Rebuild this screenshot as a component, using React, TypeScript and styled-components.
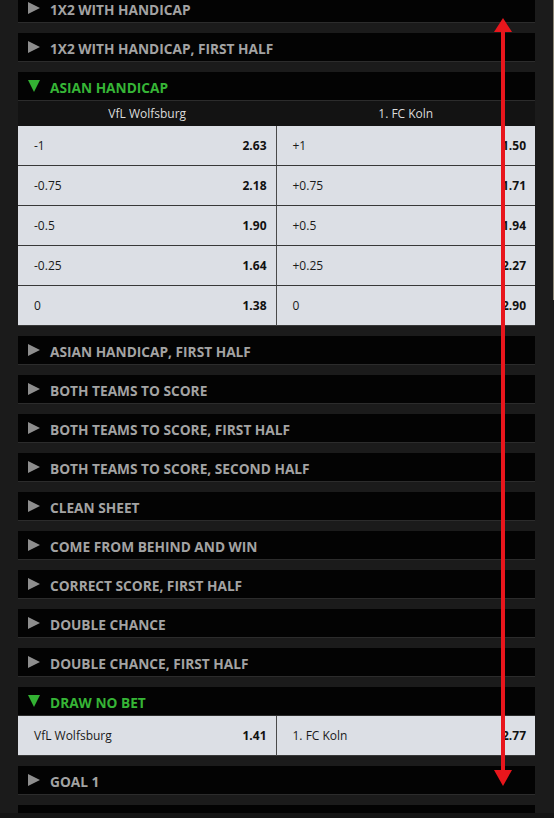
import React from 'react';
import styled, { createGlobalStyle } from 'styled-components';

const GlobalStyle = createGlobalStyle`
  html, body {
    margin: 0;
    padding: 0;
    background: #1b1b1b;
    font-family: "Open Sans", "Liberation Sans", sans-serif;
  }
`;

const Viewport = styled.div`
  position: relative;
  width: 554px;
  height: 818px;
  overflow: hidden;
  background: #1b1b1b;
`;

const MarketList = styled.div`
  display: flex;
  flex-direction: column;
  gap: 10px;
  padding: 0 19px 0 18px;
  margin-top: -6px;
`;

const Market = styled.section`
  display: flex;
  flex-direction: column;
`;

const MarketHeader = styled.div`
  height: 28px;
  background: #030303;
  border-bottom: 1px solid #2c2c2c;
  display: flex;
  align-items: center;
  padding-left: 10px;
  gap: 10px;
`;

const Caret = styled.span<{ $open: boolean }>`
  width: 0;
  height: 0;
  ${({ $open }) =>
    $open
      ? `
    border-left: 6px solid transparent;
    border-right: 6px solid transparent;
    border-top: 12px solid #33b233;
  `
      : `
    border-top: 6px solid transparent;
    border-bottom: 6px solid transparent;
    border-left: 12px solid #8e8e8e;
  `}
`;

const MarketTitle = styled.span<{ $open: boolean }>`
  font-size: 13.7px;
  font-weight: 700;
  text-transform: uppercase;
  color: ${({ $open }) => ($open ? '#36b536' : '#a3a3a3')};
  position: relative;
  top: 1px;
`;

const TeamsRow = styled.div`
  display: grid;
  grid-template-columns: 1fr 1fr;
  height: 25px;
  background: #131313;
  color: #dcdcdc;
  font-size: 12px;
  align-items: center;
  text-align: center;
`;

const OddsGrid = styled.div`
  display: grid;
  grid-template-columns: 1fr 1fr;
`;

const OddsCell = styled.div<{ $left?: boolean }>`
  height: 39px;
  background: #dcdfe5;
  border-bottom: 1px solid #383838;
  border-right: ${({ $left }) => ($left ? '1px solid #4a4a4a' : 'none')};
  display: flex;
  align-items: center;
  justify-content: space-between;
  padding: 0 9px 0 16px;
  font-size: 12px;
  color: #1a1a1a;
`;

const Price = styled.b`
  font-weight: 700;
  color: #111;
`;

const ScrollThumb = styled.div`
  position: absolute;
  right: 0;
  top: 0;
  width: 1px;
  height: 300px;
  background: #8d8878;
`;

const BottomBar = styled.div`
  position: absolute;
  left: 0;
  right: 0;
  bottom: 0;
  height: 5px;
  background: #151515;
`;

const Overlay = styled.svg`
  position: absolute;
  left: 0;
  top: 0;
  pointer-events: none;
`;

type Odd = [string, string];
type MarketData = {
  title: string;
  open?: boolean;
  teams?: [string, string];
  rows?: [Odd, Odd][];
};

const markets: MarketData[] = [
  { title: '1X2 with handicap' },
  { title: '1X2 with handicap, first half' },
  {
    title: 'Asian handicap',
    open: true,
    teams: ['VfL Wolfsburg', '1. FC Koln'],
    rows: [
      [['-1', '2.63'], ['+1', '1.50']],
      [['-0.75', '2.18'], ['+0.75', '1.71']],
      [['-0.5', '1.90'], ['+0.5', '1.94']],
      [['-0.25', '1.64'], ['+0.25', '2.27']],
      [['0', '1.38'], ['0', '2.90']],
    ],
  },
  { title: 'Asian handicap, first half' },
  { title: 'Both teams to score' },
  { title: 'Both teams to score, first half' },
  { title: 'Both teams to score, second half' },
  { title: 'Clean sheet' },
  { title: 'Come from behind and win' },
  { title: 'Correct score, first half' },
  { title: 'Double chance' },
  { title: 'Double chance, first half' },
  {
    title: 'Draw no bet',
    open: true,
    rows: [[['VfL Wolfsburg', '1.41'], ['1. FC Koln', '2.77']]],
  },
  { title: 'Goal 1' },
];

const App: React.FC = () => {
  return (
    <Viewport>
      <GlobalStyle />
      <MarketList>
        {markets.map((m) => (
          <Market key={m.title}>
            <MarketHeader>
              <Caret $open={!!m.open} />
              <MarketTitle $open={!!m.open}>{m.title}</MarketTitle>
            </MarketHeader>
            {m.teams && (
              <TeamsRow>
                <span>{m.teams[0]}</span>
                <span>{m.teams[1]}</span>
              </TeamsRow>
            )}
            {m.rows && (
              <OddsGrid>
                {m.rows.map(([a, b], i) => (
                  <React.Fragment key={i}>
                    <OddsCell $left>
                      <span>{a[0]}</span>
                      <Price>{a[1]}</Price>
                    </OddsCell>
                    <OddsCell>
                      <span>{b[0]}</span>
                      <Price>{b[1]}</Price>
                    </OddsCell>
                  </React.Fragment>
                ))}
              </OddsGrid>
            )}
          </Market>
        ))}
        <Market>
          <MarketHeader />
        </Market>
      </MarketList>
      <ScrollThumb />
      <BottomBar />
      <Overlay width="554" height="818" viewBox="0 0 554 818">
        <line x1="503" y1="30" x2="503" y2="772" stroke="#e8161c" strokeWidth="4" />
        <polygon points="503,18 494,32 512,32" fill="#e8161c" />
        <polygon points="503,786 494,770 512,770" fill="#e8161c" />
      </Overlay>
    </Viewport>
  );
};

export default App;
